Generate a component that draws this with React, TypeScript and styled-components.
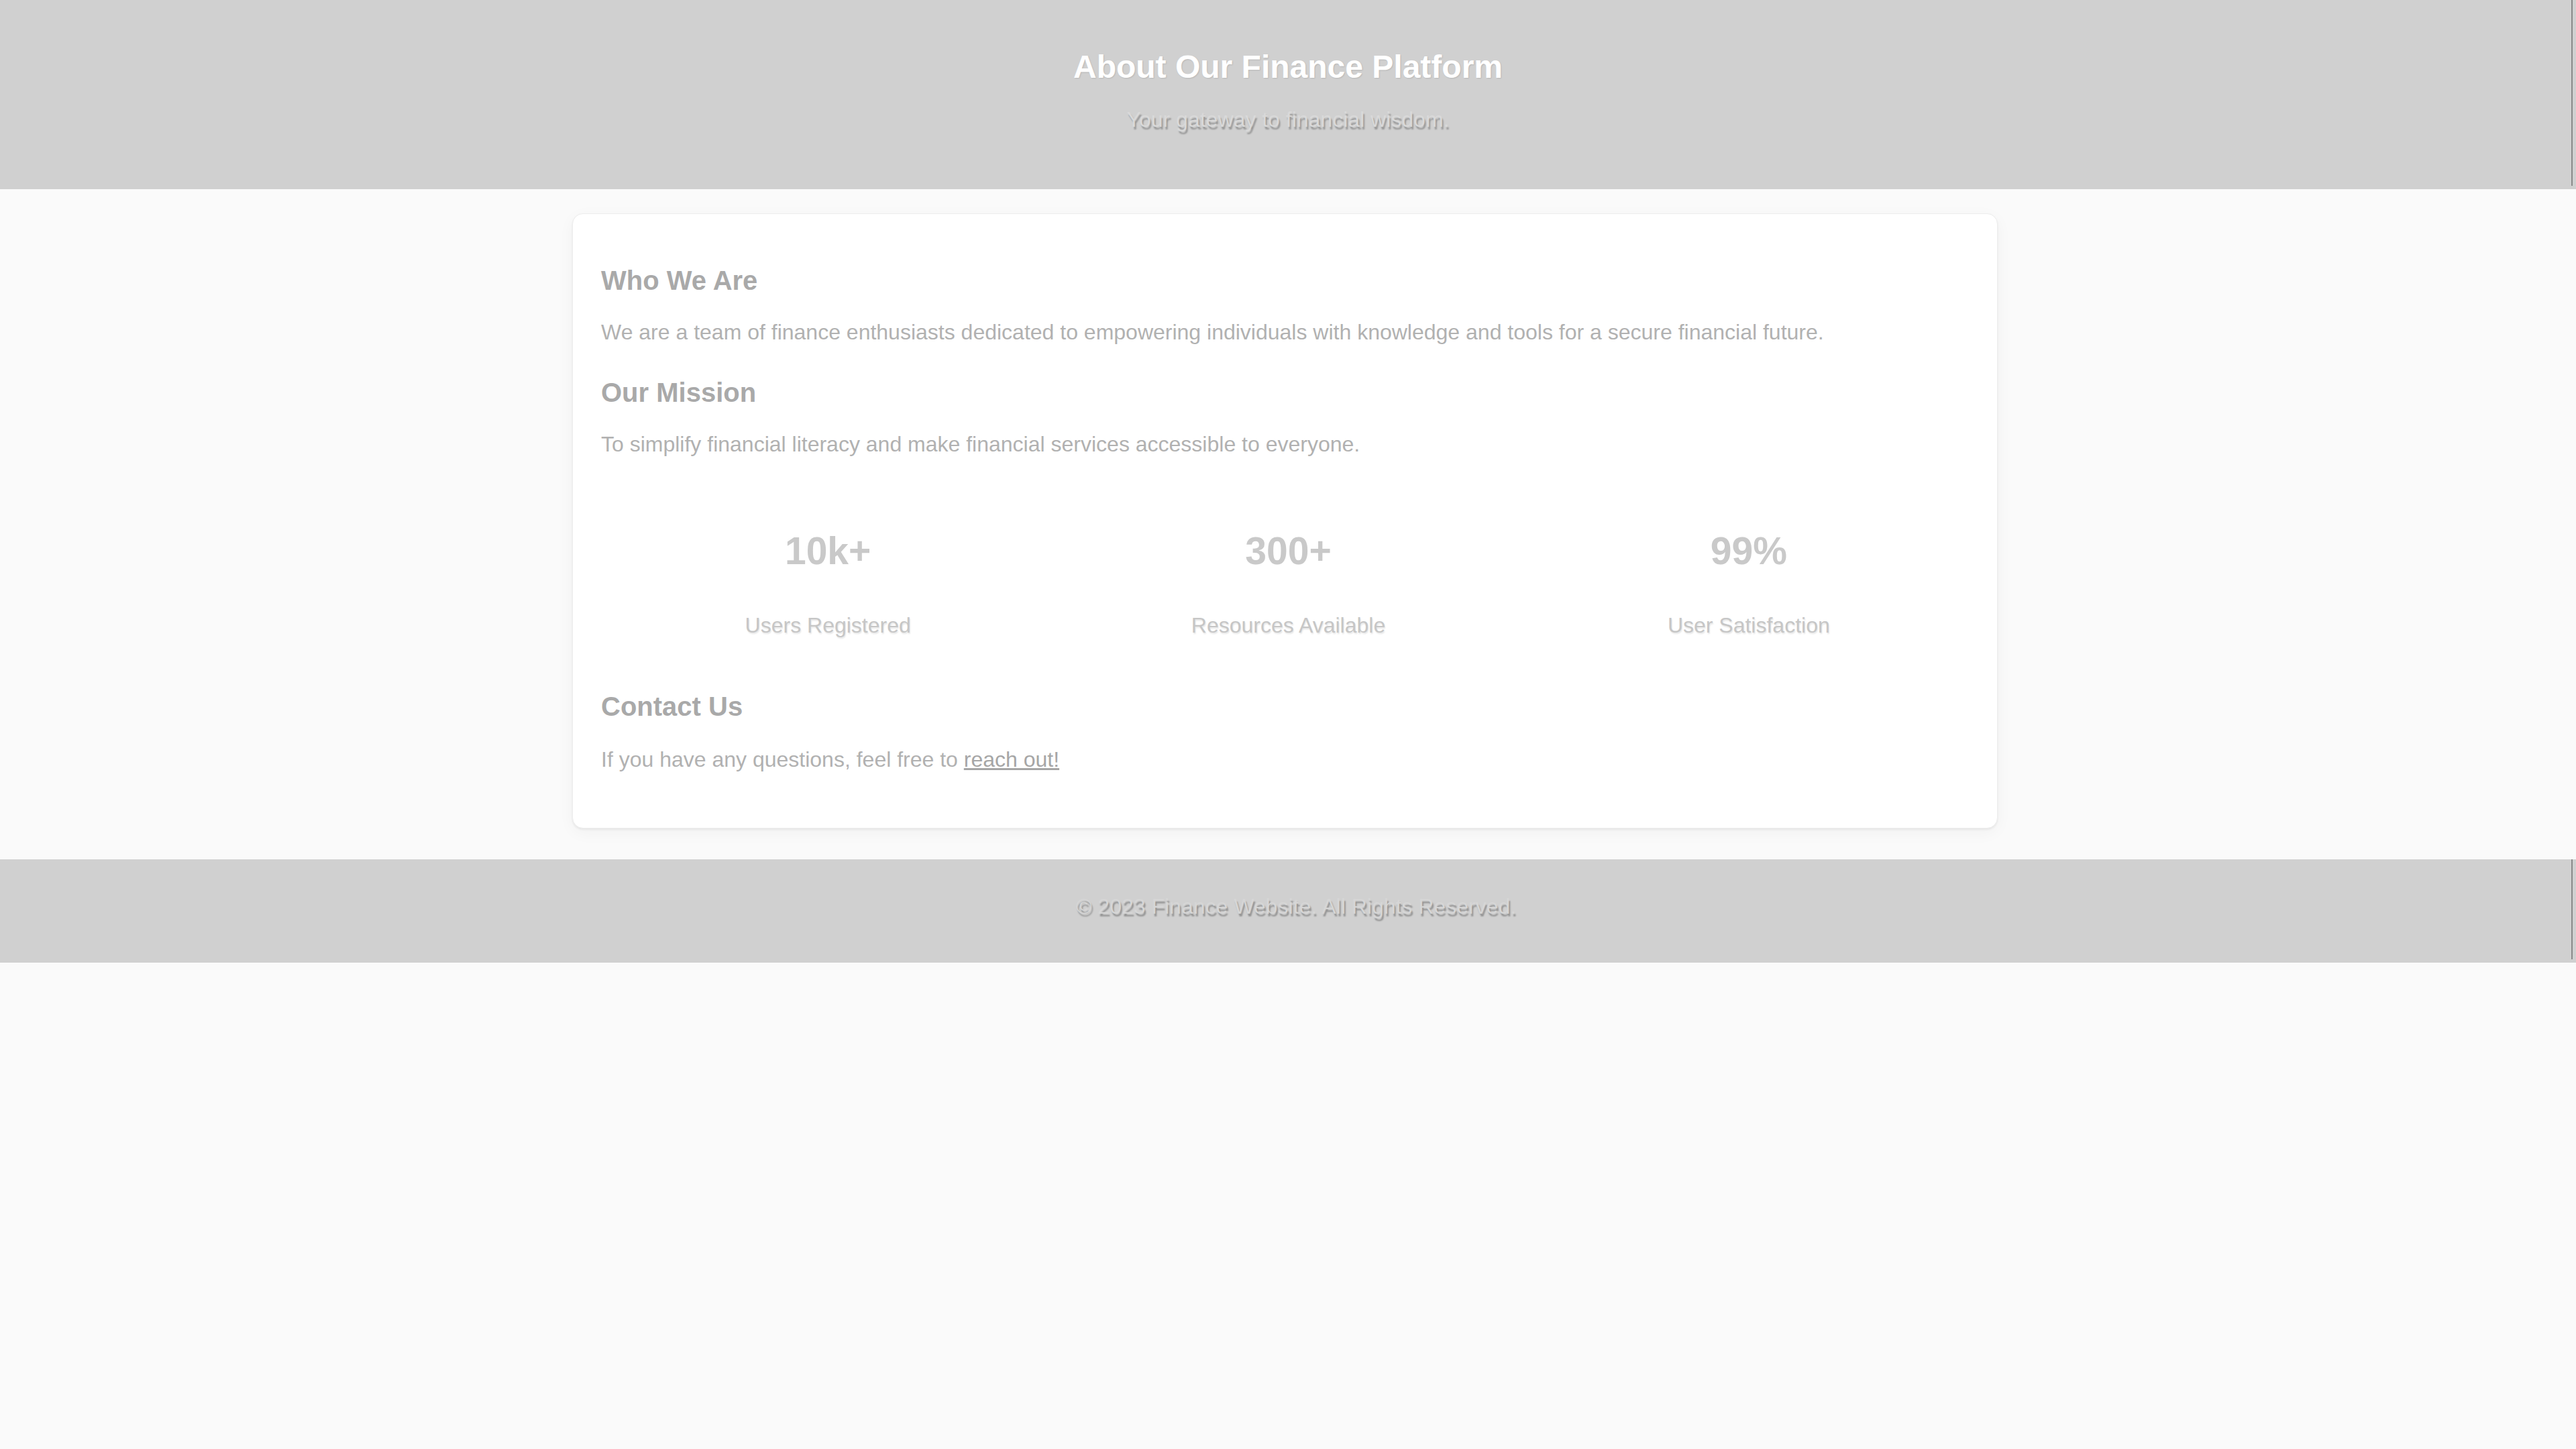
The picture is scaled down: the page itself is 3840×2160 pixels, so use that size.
import styled, { createGlobalStyle } from "styled-components";

const GlobalStyle = createGlobalStyle`
  * {
    box-sizing: border-box;
  }

  body {
    margin: 0;
    background: #fafafa;
    font-family: "Liberation Sans", Arial, Helvetica, sans-serif;
  }
`;

const Header = styled.header`
  position: relative;
  background: #d0d0d0;
  text-align: center;
  padding: 72px 20px 85px;

  &::after {
    content: "";
    position: absolute;
    top: 0;
    right: 5px;
    bottom: 5px;
    width: 2px;
    background: #8a8a8a;
  }
`;

const Title = styled.h1`
  margin: 0 0 33px;
  font-size: 48px;
  font-weight: bold;
  line-height: normal;
  color: #ffffff;
  text-shadow: 1px 1px 2px rgba(0, 0, 0, 0.12);
`;

const Tagline = styled.p`
  margin: 0;
  font-size: 32px;
  line-height: normal;
  color: #d9d9d9;
  text-shadow: 2px 4px 2px rgba(0, 0, 0, 0.28);
`;

const Main = styled.main`
  padding: 36px 9px 46px 0;
`;

const Card = styled.section`
  max-width: 2125px;
  margin: 0 auto;
  padding: 77px 42px 83px;
  background: #ffffff;
  border: 1px solid #ececec;
  border-radius: 16px;
  box-shadow: 0 2px 3px rgba(0, 0, 0, 0.06), 0 6px 24px rgba(0, 0, 0, 0.04);
`;

const SectionTitle = styled.h2<{ $gap?: number }>`
  margin: 0 0 ${({ $gap }) => $gap ?? 36}px;
  font-size: 40px;
  font-weight: bold;
  line-height: normal;
  color: #a9a9a9;
`;

const Text = styled.p<{ $last?: boolean }>`
  margin: 0 0 ${({ $last }) => ($last ? 0 : 49)}px;
  font-size: 32px;
  line-height: normal;
  color: #b1b1b1;
`;

const Link = styled.a`
  color: #a6a6a6;
  text-decoration: underline;
`;

const Stats = styled.div`
  display: grid;
  grid-template-columns: repeat(3, 1fr);
  gap: 30px;
  padding-left: 10px;
  margin: 107px 0 80px;
`;

const Stat = styled.div`
  display: flex;
  flex-direction: column;
  align-items: center;
`;

const StatValue = styled.span`
  font-size: 57px;
  font-weight: bold;
  line-height: normal;
  color: #c9c9c9;
  margin-bottom: 60px;
`;

const StatLabel = styled.span`
  font-size: 32px;
  line-height: normal;
  color: #c6c6c6;
  text-shadow: 1px 2px 2px rgba(0, 0, 0, 0.1);
`;

const Footer = styled.footer`
  position: relative;
  background: #d0d0d0;
  text-align: center;
  padding: 52px 20px 65px 44px;
  font-size: 32px;
  line-height: normal;
  color: #d6d6d6;
  text-shadow: 2px 4px 2px rgba(0, 0, 0, 0.3);

  &::after {
    content: "";
    position: absolute;
    top: 0;
    right: 5px;
    bottom: 5px;
    width: 2px;
    background: #8a8a8a;
  }
`;

const stats = [
  { value: "10k+", label: "Users Registered" },
  { value: "300+", label: "Resources Available" },
  { value: "99%", label: "User Satisfaction" },
];

export default function App() {
  return (
    <>
      <GlobalStyle />
      <Header>
        <Title>About Our Finance Platform</Title>
        <Tagline>Your gateway to financial wisdom.</Tagline>
      </Header>

      <Main>
        <Card>
          <SectionTitle>Who We Are</SectionTitle>
          <Text>
            We are a team of finance enthusiasts dedicated to empowering
            individuals with knowledge and tools for a secure financial future.
          </Text>

          <SectionTitle>Our Mission</SectionTitle>
          <Text>
            To simplify financial literacy and make financial services
            accessible to everyone.
          </Text>

          <Stats>
            {stats.map((s) => (
              <Stat key={s.label}>
                <StatValue>{s.value}</StatValue>
                <StatLabel>{s.label}</StatLabel>
              </Stat>
            ))}
          </Stats>

          <SectionTitle $gap={38}>Contact Us</SectionTitle>
          <Text $last>
            If you have any questions, feel free to{" "}
            <Link href="#contact">reach out!</Link>
          </Text>
        </Card>
      </Main>

      <Footer>© 2023 Finance Website. All Rights Reserved.</Footer>
    </>
  );
}
